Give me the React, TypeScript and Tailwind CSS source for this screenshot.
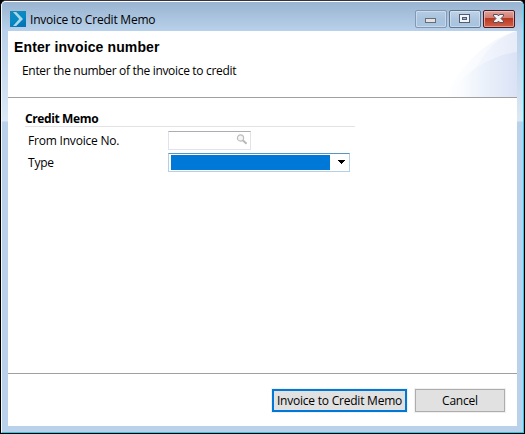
import React from "react";

const text = "whitespace-nowrap font-['Open_Sans','Noto_Sans',sans-serif] text-[12px] leading-4 text-black";

function AppIcon() {
  return (
    <svg width="16" height="16" viewBox="0 0 16 16">
      <defs>
        <linearGradient id="logo" x1="0" y1="0" x2="0.5" y2="1">
          <stop offset="0" stopColor="#1789b9" />
          <stop offset="0.6" stopColor="#0689c5" />
          <stop offset="1" stopColor="#0475b5" />
        </linearGradient>
      </defs>
      <rect width="16" height="16" fill="url(#logo)" />
      <path d="M3 1H6.2L13 8L6.2 15H3L9.2 8Z" fill="#a9d8e9" />
    </svg>
  );
}

function CaptionButton({ kind }: { kind: "min" | "max" | "close" }) {
  const close = kind === "close";
  const tone = close
    ? "border-[#4a1825] from-[#dfa39b] via-[#cf7569] to-[#d0604a]"
    : kind === "min"
      ? "border-[#8199b5] from-[#b4cbe3] via-[#a9c3de] to-[#a9c5e1]"
      : "border-[#60758f] from-[#bed3e7] via-[#adc6df] to-[#a7c3df]";
  return (
    <button className={`flex h-[18px] w-8 items-center justify-center rounded-[2px] border bg-linear-to-b shadow-[inset_0_0_0_1px_rgba(255,255,255,0.35)] ${tone}`}>
      <svg width="30" height="16" viewBox="0 0 30 16" shapeRendering="crispEdges">
        <defs>
          <linearGradient id="closeLow" x1="0" y1="0" x2="0" y2="1">
            <stop offset="0" stopColor="#b9351f" />
            <stop offset="1" stopColor="#cf5c42" />
          </linearGradient>
        </defs>
        {close && <rect x="1" y="7" width="28" height="8" fill="url(#closeLow)" />}
        {kind === "min" && <rect x="9.5" y="7.5" width="10" height="4" fill="#e2e2e2" stroke="#666d79" />}
        {kind === "max" && (
          <>
            <rect x="9.5" y="3.5" width="10" height="8" fill="#f3f5f8" stroke="#535c72" />
            <rect x="12.5" y="6.5" width="4" height="2" fill="#9fb8d3" stroke="#535c72" />
          </>
        )}
        {close && (
          <path
            d="M9.5 3.5H13.5L14.5 5L15.5 3.5H19.5V5L17 7.5L19.5 10V11.5H15.5L14.5 10L13.5 11.5H9.5V10L12 7.5L9.5 5Z"
            fill="#f3f3f3"
            stroke="#5b4d5b"
            shapeRendering="auto"
          />
        )}
      </svg>
    </button>
  );
}

function HeaderArt() {
  return (
    <svg className="shrink-0" width="77" height="66" viewBox="0 0 77 66">
      <defs>
        <linearGradient id="wide" x1="0" x2="1">
          <stop offset="0" stopColor="#ffffff" />
          <stop offset="0.4" stopColor="#fafbfe" />
          <stop offset="1" stopColor="#f0f3fc" />
        </linearGradient>
        <linearGradient id="mid" x1="0" x2="1">
          <stop offset="0" stopColor="#f8faff" />
          <stop offset="1" stopColor="#e6ecf8" />
        </linearGradient>
        <linearGradient id="low" x1="0" x2="1">
          <stop offset="0" stopColor="#ffffff" />
          <stop offset="0.25" stopColor="#f9fbfe" />
          <stop offset="0.5" stopColor="#edf3fb" />
          <stop offset="1" stopColor="#dbe2f5" />
        </linearGradient>
      </defs>
      <path d="M5 66C19 37 44 9 77 0V66Z" fill="url(#wide)" />
      <path d="M28 66C31 38 49 8 77 0V66Z" fill="url(#mid)" />
      <path d="M5 66C23 44 45 26 77 21V66Z" fill="url(#low)" />
    </svg>
  );
}

function SearchIcon() {
  return (
    <svg width="12" height="12" viewBox="0 0 12 12" fill="none">
      <circle cx="4.5" cy="4" r="3.1" fill="#f5f5f5" stroke="#bdbdbd" strokeWidth="1.2" />
      <path d="M7 6.6L10.6 9.8" stroke="#b8b8b8" strokeWidth="2" />
    </svg>
  );
}

export default function App() {
  return (
    <div className="h-[434px] w-[525px] overflow-hidden bg-black">
      <div className="flex h-[434px] w-[525px] flex-col rounded-t-[6px] border border-t-[#33323e] border-x-black border-b-black bg-[#b9d1ea]">
        <div className="flex min-h-0 flex-1 flex-col rounded-t-[5px] border border-t-white border-r-[#26cbe5] border-b-[#26cbe5] border-l-[#f2f8fd]">
          <header className="flex h-[29px] shrink-0 items-start rounded-t-[4px] bg-linear-to-b from-[#99b4d1] to-[#b9d1ea] pl-2 pr-2">
            <span className="mt-[9px]"><AppIcon /></span>
            <span className={`${text} ml-1 mt-[10px] tracking-[-0.21px]`}>Invoice to Credit Memo</span>
            <div className="ml-auto mt-2 flex gap-[2px]">
              <CaptionButton kind="min" />
              <CaptionButton kind="max" />
              <CaptionButton kind="close" />
            </div>
          </header>
          <div className="flex min-h-0 flex-1 bg-linear-to-b from-[#b9d1ea] from-[0px] via-[#dce8f5] via-[90px] to-[#b9d1ea] to-[91px] px-[6px] pb-[6px]">
            <div className="flex w-[509px] flex-col bg-white">
              <section className="flex h-[67px] shrink-0 justify-between border-b border-[#a0a0a0]">
                <div className="pl-[6px] pt-[8px]">
                  <h1 className="whitespace-nowrap font-['Liberation_Sans',Arial,sans-serif] text-[14px] font-bold leading-[17px] tracking-[0.12px] text-black">Enter invoice number</h1>
                  <p className={`${text} ml-2 mt-[7px] tracking-[-0.32px]`}>Enter the number of the invoice to credit</p>
                </div>
                <HeaderArt />
              </section>
              <main className="flex-1 pl-[17px] pt-[13px]">
                <h2 className={`${text} h-[16px] w-[330px] border-b border-[#e3e3e6] font-bold tracking-[-0.38px]`}>Credit Memo</h2>
                <div className="mt-1 flex h-[19px] items-center">
                  <label className={`${text} w-[143px] pl-[3px] tracking-[-0.2px]`}>From Invoice No.</label>
                  <div className="flex h-[19px] w-[83px] justify-end border border-[#e2e3ea] border-t-[#abadb3] pr-[2px] pt-[2px]"><SearchIcon /></div>
                </div>
                <div className="mt-[3px] flex h-[19px] items-center">
                  <label className={`${text} w-[143px] pl-[3px] tracking-[-0.2px]`}>Type</label>
                  <div className="flex h-[19px] w-[182px] justify-between border border-[#b5cfe7] border-t-[#5794bf] pl-[2px] pr-[4px] pt-px">
                    <div className="h-[15px] w-[159px] bg-[#0078d7]" />
                    <svg className="mt-[5px]" width="7" height="4" viewBox="0 0 7 4" shapeRendering="crispEdges">
                      <path d="M0 0H7V1H6V2H5V3H4V4H3V3H2V2H1V1H0Z" />
                    </svg>
                  </div>
                </div>
              </main>
              <footer className="flex h-[53px] shrink-0 justify-end gap-2 border-t border-[#a0a0a0] pr-3 pt-[15px]">
                <button className={`${text} flex h-[23px] w-[135px] items-center justify-center border-2 border-[#0078d7] bg-[#e1e1e1] tracking-[-0.22px] shadow-[0_0_0_1px_#f0f0f0]`}>Invoice to Credit Memo</button>
                <button className={`${text} flex h-[23px] w-[90px] items-center justify-center border border-[#adadad] bg-[#e1e1e1] tracking-[-0.2px] shadow-[0_0_0_1px_#f0f0f0]`}>Cancel</button>
              </footer>
            </div>
          </div>
        </div>
      </div>
    </div>
  );
}
